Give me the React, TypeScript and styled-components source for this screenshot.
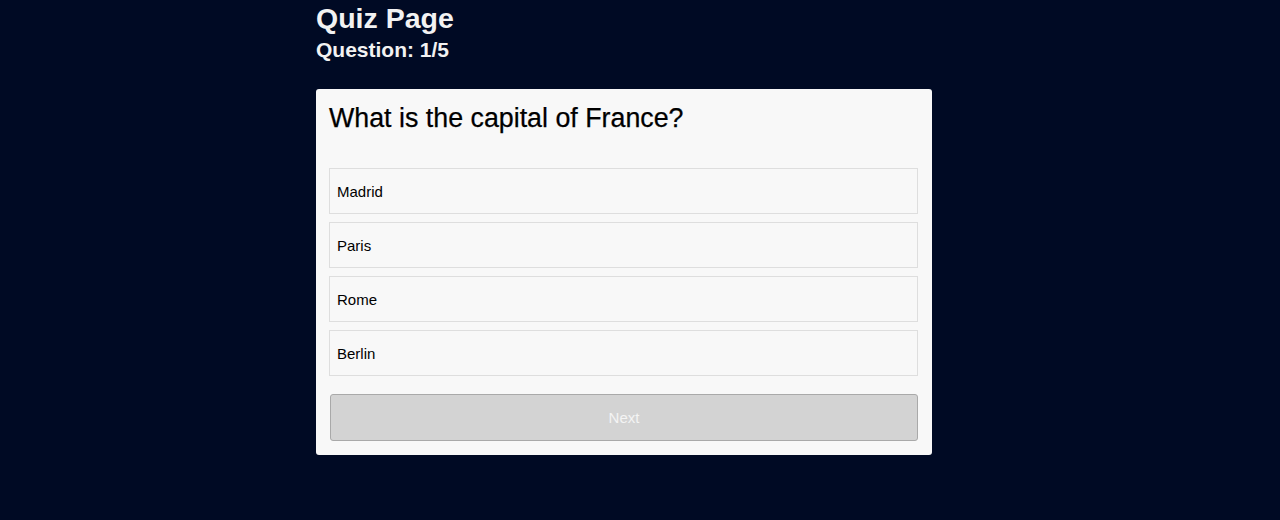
import React, { useState } from "react";
import styled, { createGlobalStyle } from "styled-components";

const Global = createGlobalStyle`
  html, body {
    margin: 0;
    padding: 0;
    background: #000a24;
    font-family: "Liberation Sans", Arial, sans-serif;
  }
`;

const Page = styled.div`
  width: 648px;
  margin: 0 auto;
  padding-top: 1px;
`;

const Header = styled.header`
  display: flex;
  flex-direction: column;
  color: #f2f2f2;
  margin-bottom: 27px;
`;

const Title = styled.h1`
  margin: 0 0 3px 0;
  font-size: 28.5px;
  line-height: 34px;
  font-weight: bold;
`;

const Subtitle = styled.h2`
  margin: 0;
  font-size: 21px;
  line-height: 24px;
  font-weight: bold;
`;

const Card = styled.section`
  width: 616px;
  box-sizing: border-box;
  background: #f8f8f8;
  border-radius: 3px;
  padding: 14px 14px 14px 13px;
  display: flex;
  flex-direction: column;
`;

const Question = styled.h3`
  margin: 0 0 35px 0;
  font-size: 26.8px;
  line-height: 30px;
  font-weight: normal;
  color: #000;
  -webkit-text-stroke: 0.25px #000;
`;

const Options = styled.div`
  display: flex;
  flex-direction: column;
  gap: 8px;
  margin-bottom: 18px;
`;

const Option = styled.button<{ $selected?: boolean }>`
  height: 46px;
  box-sizing: border-box;
  display: flex;
  align-items: center;
  padding: 0 7px;
  background: ${(p) => (p.$selected ? "#e6eefc" : "#f8f8f8")};
  border: 1px solid #dedede;
  font-family: "Liberation Sans", Arial, sans-serif;
  font-size: 15px;
  color: #000;
  text-align: left;
  cursor: pointer;
`;

const NextButton = styled.button`
  height: 47px;
  margin-left: 1px;
  box-sizing: border-box;
  background: #d3d3d3;
  border: 1px solid #a9a9a9;
  border-radius: 3px;
  color: #f4f4f4;
  font-family: "Liberation Sans", Arial, sans-serif;
  font-size: 15px;
`;

const answers = ["Madrid", "Paris", "Rome", "Berlin"];

export default function App() {
  const [selected, setSelected] = useState<number | null>(null);
  return (
    <>
      <Global />
      <Page>
        <Header>
          <Title>Quiz Page</Title>
          <Subtitle>Question: 1/5</Subtitle>
        </Header>
        <Card>
          <Question>What is the capital of France?</Question>
          <Options>
            {answers.map((a, i) => (
              <Option key={a} $selected={selected === i} onClick={() => setSelected(i)}>
                {a}
              </Option>
            ))}
          </Options>
          <NextButton disabled={selected === null}>Next</NextButton>
        </Card>
      </Page>
    </>
  );
}
